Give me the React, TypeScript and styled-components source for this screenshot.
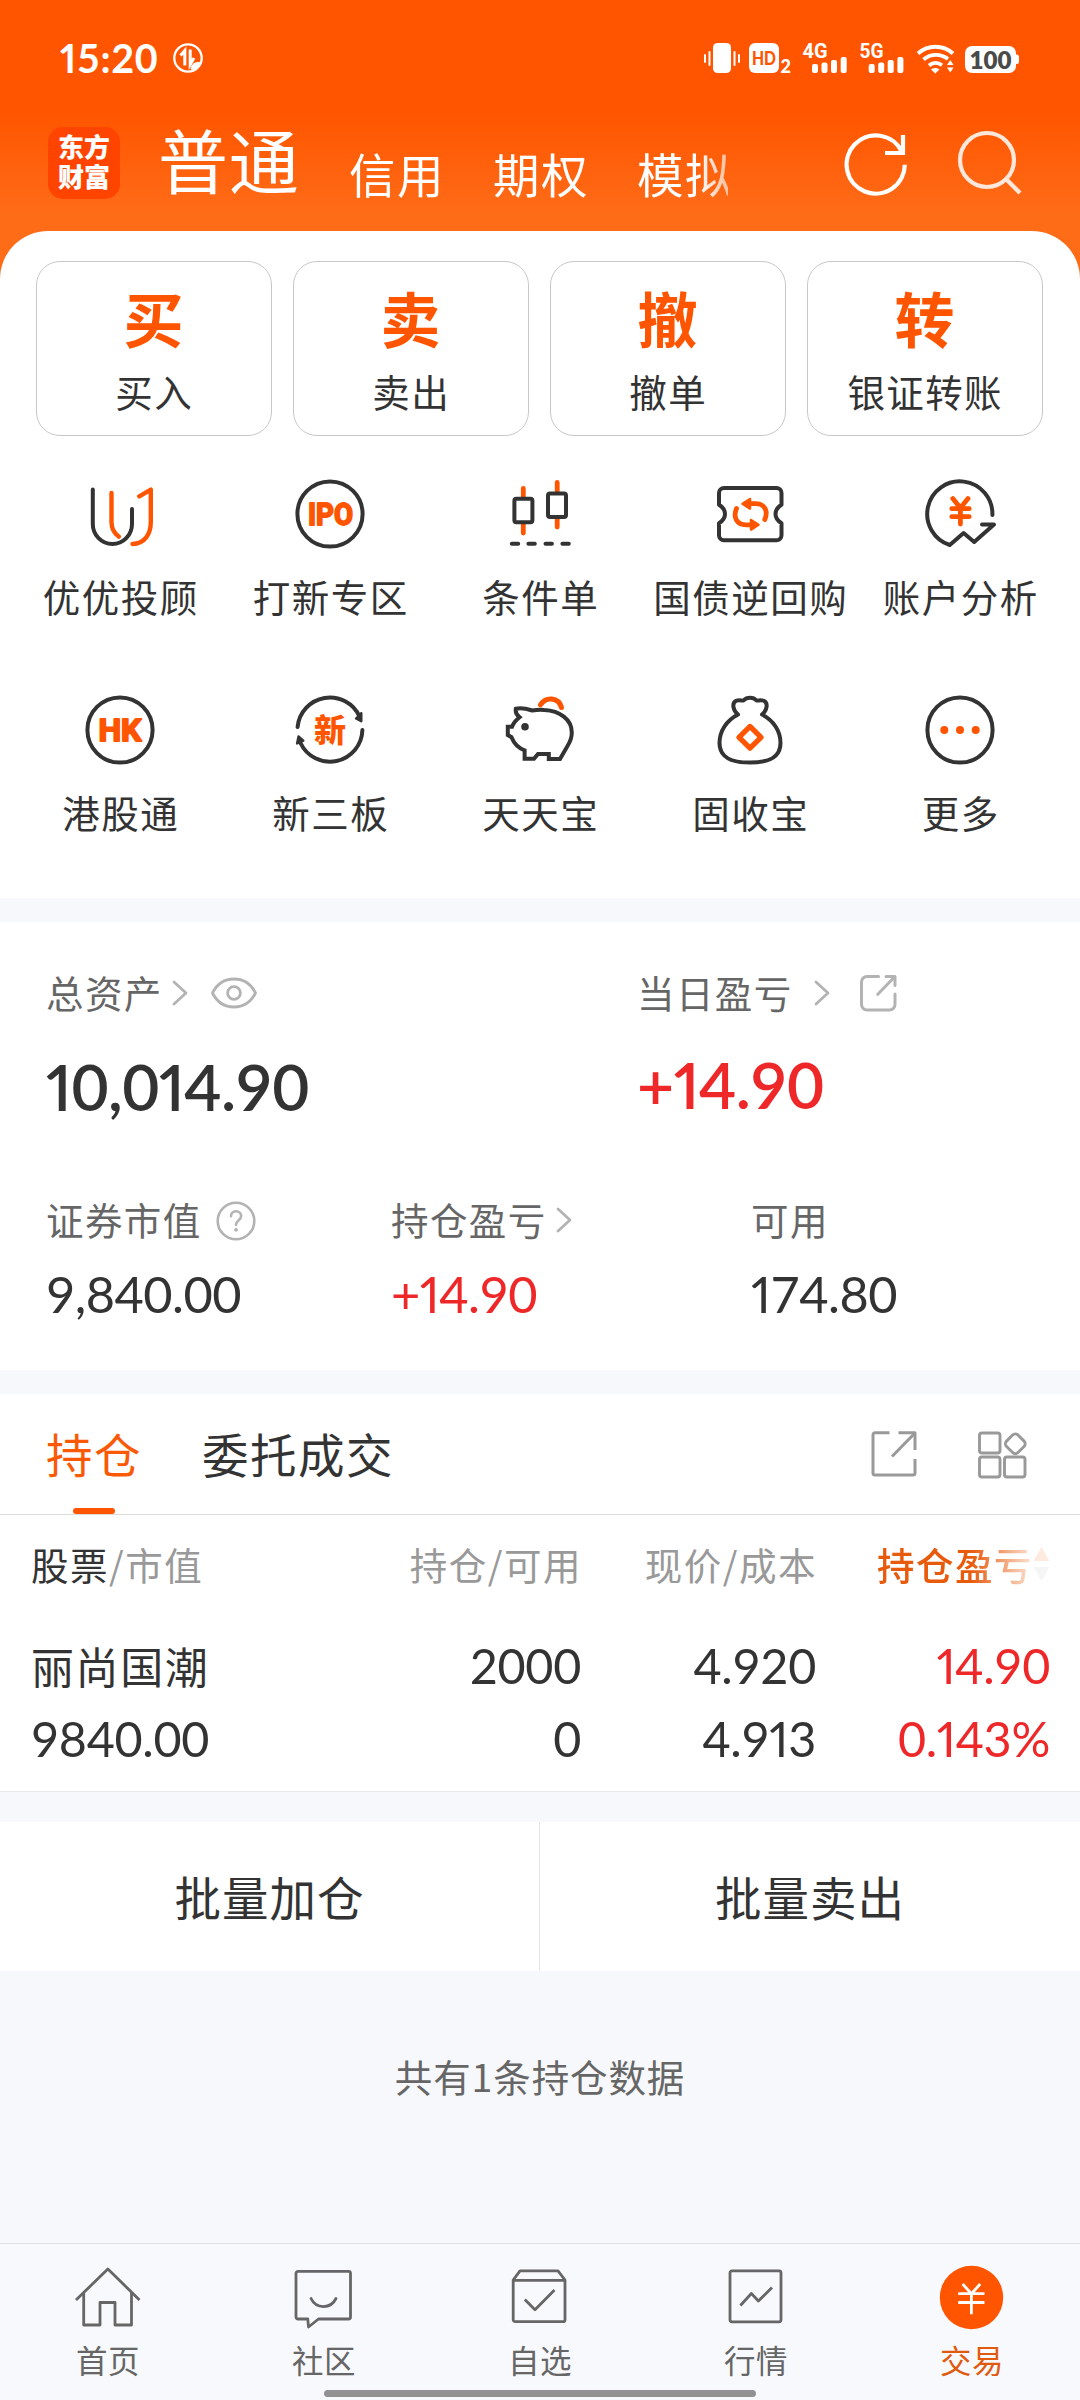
import React from "react";
import styled, { createGlobalStyle } from "styled-components";

const ORANGE = "#ff5500";
const INK = "#333333";
const RED = "#ee2728";

const GlobalStyle = createGlobalStyle`
  * { box-sizing: border-box; }
  html, body { margin: 0; padding: 0; }
  body {
    width: 1080px;
    background: #f7f8fb;
    color: ${INK};
    font-family: "Noto Sans CJK SC", sans-serif;
    font-weight: 400;
    -webkit-font-smoothing: antialiased;
  }
  svg { display: block; flex: none; overflow: visible; }
`;

const Screen = styled.div`
  width: 1080px;
  height: 2400px;
  display: flex;
  flex-direction: column;
  overflow: hidden;
  background: #f7f8fb;
`;

/* ---------- numbers ---------- */

const Digits = styled.span`
  font-variant-numeric: tabular-nums;
`;

const NarrowOne = styled.span`
  font-variant-numeric: proportional-nums;
`;

/* Every figure keeps an even advance except the slim "1". */
const Num = ({ children }: { children: string }) => (
  <Digits>
    {children.split(/(1)/).map((part, i) => (part === "1" ? <NarrowOne key={i}>1</NarrowOne> : part))}
  </Digits>
);

/* ---------- header ---------- */

const Header = styled.header`
  height: 290px;
  flex: none;
  background: linear-gradient(180deg, ${ORANGE} 0, ${ORANGE} 112px, #ff6c18 215px, #ff6c18 100%);
`;

const StatusBar = styled.div`
  height: 115px;
  padding: 0 60px 0 60px;
  display: flex;
  align-items: center;
  color: #fff;
`;

const Clock = styled.div`
  width: 113px;
  font: 700 39.5px/44px Lato, sans-serif;
  letter-spacing: 0.6px;
`;

const StatusIcons = styled.div`
  margin-left: auto;
  display: flex;
  align-items: center;
`;

const NavBar = styled.nav`
  height: 116px;
  padding: 0 57px 0 48px;
  display: flex;
  align-items: flex-start;
  color: #fff;
`;

const Logo = styled.div`
  width: 72px;
  height: 72px;
  margin: 12px 38px 0 0;
  padding-top: 6px;
  border-radius: 15px;
  background: #ff4400;
  text-align: center;
  font-family: "Liberation Sans", "Noto Sans CJK SC", sans-serif;
  font-size: 26px;
  font-weight: 900;
  line-height: 30px;
`;

const NavTabs = styled.div`
  width: 570px;
  height: 100px;
  display: flex;
  white-space: nowrap;
  mask-image: linear-gradient(90deg, #000 540px, transparent 612px);
  mask-size: 612px 100%;
`;

const NavTab = styled.span<{ $active?: boolean }>`
  width: ${(p) => (p.$active ? 191 : 144)}px;
  flex: none;
  font-size: ${(p) => (p.$active ? 70 : 46.5)}px;
  letter-spacing: ${(p) => (p.$active ? 0.8 : 1.4)}px;
  line-height: 60px;
  padding-top: ${(p) => (p.$active ? 14 : 28)}px;
`;

const NavIcons = styled.div`
  margin-left: auto;
  padding-top: 13px;
  display: flex;
  gap: 41px;
`;

/* ---------- trade panel ---------- */

const Sheet = styled.section`
  height: 667px;
  margin-top: -59px;
  padding: 30px 36px 0;
  flex: none;
  border-radius: 48px 48px 0 0;
  background: #fff;
`;

const ActionRow = styled.div`
  display: grid;
  grid-template-columns: repeat(4, 236px);
  column-gap: 21px;
`;

const ActionCard = styled.button`
  height: 175px;
  padding: 0;
  border: 1px solid #c8c8c8;
  border-radius: 24px;
  background: #fff;
  display: flex;
  flex-direction: column;
  align-items: center;
  font-family: inherit;
  color: ${INK};
`;

const ActionGlyph = styled.span`
  margin-top: 19px;
  margin-right: 1px;
  font-size: 60px;
  line-height: 72px;
  font-weight: 700;
  color: ${ORANGE};
`;

const ActionLabel = styled.span`
  margin-top: 12px;
  font-size: 37.5px;
  line-height: 52px;
  letter-spacing: 1.4px;
  margin-right: -0.4px;
`;

const ToolGrid = styled.div`
  margin: 40px -21px 0;
  display: grid;
  grid-template-columns: repeat(5, 210px);
  grid-auto-rows: 216px;
`;

const Tool = styled.div`
  display: flex;
  flex-direction: column;
  align-items: center;
`;

const ToolLabel = styled.span`
  margin-top: 17px;
  font-size: 37.5px;
  line-height: 54px;
  letter-spacing: 1.5px;
  margin-right: -1.5px;
  white-space: nowrap;
`;

const ToolText = styled.text`
  fill: ${ORANGE};
  stroke: ${ORANGE};
  stroke-width: 1.8px;
  stroke-linejoin: round;
  font: 700 30.5px Roboto, sans-serif;
`;

const ToolHan = styled.text`
  fill: ${ORANGE};
  font: 900 32px "Noto Sans CJK SC", sans-serif;
`;

/* ---------- assets ---------- */

const Assets = styled.section`
  height: 448px;
  margin-top: 24px;
  padding: 0 0 0 46px;
  flex: none;
  background: #fff;
`;

const AssetRow = styled.div<{ $height: number; $columns: string }>`
  height: ${(p) => p.$height}px;
  display: grid;
  grid-template-columns: ${(p) => p.$columns};
`;

const AssetLabel = styled.div<{ $top: number }>`
  margin-top: ${(p) => p.$top}px;
  height: 54px;
  display: flex;
  align-items: center;
  font-size: 37.5px;
  line-height: 54px;
  letter-spacing: 1.4px;
  color: #666;

  svg {
    margin-top: 1px;
  }
`;

const Space = styled.i<{ $w: number }>`
  width: ${(p) => p.$w}px;
  flex: none;
`;

const Amount = styled.div<{ $big?: boolean; $up?: boolean; $top: number; $track?: number }>`
  margin-top: ${(p) => p.$top}px;
  font-family: Lato, sans-serif;
  font-size: ${(p) => (p.$big ? 64 : 50.5)}px;
  font-weight: ${(p) => (p.$big ? 600 : 400)};
  line-height: 70px;
  letter-spacing: ${(p) => p.$track ?? -0.5}px;
  color: ${(p) => (p.$up ? RED : INK)};
`;

/* ---------- holdings ---------- */

const Holdings = styled.section`
  height: 398px;
  margin-top: 24px;
  flex: none;
  background: #fff;
  border-bottom: 1px solid #e8e9eb;
`;

const TabBar = styled.div`
  height: 121px;
  padding: 0 53px 0 46px;
  display: flex;
  border-bottom: 1px solid #dcdcdc;
`;

const Tab = styled.div<{ $active?: boolean }>`
  margin-right: 60px;
  display: flex;
  flex-direction: column;
  align-items: center;
  justify-content: space-between;
  padding-top: 27px;
  font-size: 46.5px;
  line-height: 64px;
  letter-spacing: 1.5px;
  color: ${(p) => (p.$active ? "#fa5a08" : INK)};

  &::after {
    content: "";
    width: 42px;
    height: 6px;
    margin-right: 1px;
    border-radius: 3px;
    background: ${(p) => (p.$active ? ORANGE : "transparent")};
  }
`;

const TabTools = styled.div`
  margin-left: auto;
  padding-top: 37px;
  display: flex;
  gap: 61px;
`;

const TableHead = styled.div`
  height: 100px;
  padding: 0 31px 3px 31px;
  display: grid;
  grid-template-columns: 250px 301px 235px 233px;
  align-items: center;
  font-size: 37.5px;
  letter-spacing: 1.5px;
  color: #999;
`;

const HeadCell = styled.div<{ $left?: boolean; $sorted?: boolean }>`
  display: flex;
  justify-content: ${(p) => (p.$left ? "flex-start" : "flex-end")};
  align-items: center;
  line-height: 54px;
  white-space: nowrap;
  color: ${(p) => (p.$sorted ? "#e85a0c" : "inherit")};
  font-weight: ${(p) => (p.$sorted ? 500 : 400)};
  ${(p) => p.$sorted && "mask-image: linear-gradient(90deg, #000 66%, rgba(0,0,0,0.12) 94%);"}
`;

const Dark = styled.span`
  color: ${INK};
`;

const HoldingRow = styled.div`
  padding: 14px 30px 0 31px;
  display: grid;
  grid-template-columns: 250px 300px 235px 234px;
`;

const HoldingCell = styled.div<{ $left?: boolean; $up?: boolean }>`
  display: flex;
  flex-direction: column;
  align-items: ${(p) => (p.$left ? "flex-start" : "flex-end")};
  color: ${(p) => (p.$up ? RED : INK)};
  font-family: Lato, sans-serif;
  font-size: 48.5px;
  letter-spacing: -0.3px;
  line-height: 73px;
`;

const StockName = styled.span`
  font-family: "Noto Sans CJK SC", sans-serif;
  font-size: 43px;
  letter-spacing: 1.6px;
  line-height: 72px;
  margin-bottom: 1px;
`;

const BatchRow = styled.div`
  height: 149px;
  margin-top: 30px;
  flex: none;
  display: grid;
  grid-template-columns: 539px 1fr;
  background: #fff;
`;

const BatchButton = styled.button`
  border: 0;
  padding: 0 0 2px;
  background: none;
  font: 400 46.5px "Noto Sans CJK SC", sans-serif;
  letter-spacing: 1px;
  color: ${INK};

  & + & {
    border-left: 1px solid #e6e7ea;
  }
`;

const Summary = styled.p`
  margin: 0;
  padding-top: 78px;
  text-align: center;
  font-size: 37.5px;
  line-height: 54px;
  letter-spacing: 0.9px;
  color: #666;
  flex: 1;
`;

/* ---------- bottom navigation ---------- */

const BottomNav = styled.nav`
  height: 157px;
  flex: none;
  border-top: 1px solid #e0e1e4;
  background: #f8f9fc;
  display: grid;
  grid-template-columns: repeat(5, 216px);
  position: relative;
`;

const BottomItem = styled.div<{ $active?: boolean }>`
  padding-top: 18px;
  display: flex;
  flex-direction: column;
  align-items: center;
  font-size: 31.5px;
  line-height: 44px;
  letter-spacing: 0.5px;
  color: ${(p) => (p.$active ? "#e05a10" : "#666")};

  span {
    margin-top: 3px;
  }
`;

const HomeIndicator = styled.div`
  position: absolute;
  left: 324px;
  bottom: 3px;
  width: 432px;
  height: 7px;
  border-radius: 4px;
  background: #929292;
`;

/* ---------- icons ---------- */

const ToolSvg = ({ children }: { children: React.ReactNode }) => (
  <svg width="76" height="76" viewBox="0 0 76 76" fill="none" stroke={INK} strokeWidth="4" strokeLinecap="round" strokeLinejoin="round">
    {children}
  </svg>
);

const AdviserIcon = () => (
  <ToolSvg>
    <path d="M10.8 13.5V48a19.6 20 0 0 0 39.2 0V33" />
    <path d="M29.5 17V46c0 6.5 3 11.5 7.2 14.6M57.3 20.3 68.8 13.6V46c0 12-6 21.8-18.3 22" stroke={ORANGE} strokeWidth="4.4" />
  </ToolSvg>
);

const IpoIcon = () => (
  <ToolSvg>
    <circle cx="38" cy="38" r="32.6" />
    <ToolText x="16" y="49" textLength="45" lengthAdjust="spacingAndGlyphs">IPO</ToolText>
  </ToolSvg>
);

const CandleIcon = () => (
  <ToolSvg>
    <path d="M21.3 12.5V21M21.3 48v9M55.2 6.5V16M55.2 43v8" stroke={ORANGE} strokeWidth="4.8" />
    <rect x="12.4" y="22.7" width="18" height="23.6" rx="2" />
    <rect x="46" y="17.5" width="18" height="23.6" rx="2" />
    <path d="M9.8 67.7h6.4M26.4 67.7h6.4M43.5 67.7h6.4M60.4 67.7h6.4" />
  </ToolSvg>
);

const RepoIcon = () => (
  <ToolSvg>
    <path d="M12 12h52.500a5 5 0 0 1 5 5v11.800c-3.600 2.200-6 5.400-6 9.200s2.400 7 6 9.200V59.300a5 5 0 0 1-5 5H12a5 5 0 0 1-5-5V47.200c3.600-2.200 6-5.400 6-9.200s-2.400-7-6-9.200V17a5 5 0 0 1 5-5Z" />
    <g stroke={ORANGE} strokeWidth="4.8">
      <path d="M24.500 32.500c-3.600 8.500 0 16.300 9.500 16.300h6M52.800 43.500c3.600-8.500 0-15.800-9.300-15.800H36" />
      <path d="M38 23v9.600l-7.500-4.800ZM39 44v9.600l7.500-4.800Z" fill={ORANGE} strokeWidth="2.5" />
    </g>
  </ToolSvg>
);

const AnalysisIcon = () => (
  <ToolSvg>
    <path d="M70.400 39A32.600 32.600 0 1 0 27.800 69L41.600 57l10.600 9L72 48.500H60" />
    <path d="M30.800 22.500l7.600 9.500 7.600-9.500M38.400 32.500V48M29.800 32.700h17.400M29.800 40.700h17.400" stroke={ORANGE} strokeWidth="4.8" />
  </ToolSvg>
);

const HkIcon = () => (
  <ToolSvg>
    <circle cx="38" cy="38" r="32.6" />
    <ToolText x="16.5" y="49" textLength="43" lengthAdjust="spacingAndGlyphs">HK</ToolText>
  </ToolSvg>
);

const NewBoardIcon = () => (
  <ToolSvg>
    <path d="M5.600 35A32.500 32.500 0 0 1 67.500 24.500M70.400 38A32.500 32.500 0 0 1 8.500 51" />
    <path d="M69.300 21.200 64 26.500l5.300 2.800ZM6.500 44.500l4.800 4.200-6.200 2.700Z" fill={INK} strokeWidth="2.4" />
    <ToolHan x="22" y="49.6" stroke="none">新</ToolHan>
  </ToolSvg>
);

const PigIcon = () => (
  <ToolSvg>
    <path d="M13.800 16.800c5-1.300 10-.3 16.500 1.700 4-.6 8-.8 12-.5 15.500.8 27.500 9.500 27.500 22.500 0 5-1.600 9.200-4.300 13.500L58 67H46.800v-5H36l-4 4.800H22.600V58.300C16.500 56 12 51.500 9.500 45.200L5.800 43V34.800H10c1.300-3.600 3.800-6.600 7.500-9.600-3-2.300-4.200-5-3.700-8.400Z" strokeLinejoin="miter" />
    <circle cx="23" cy="34.7" r="3.8" fill={INK} stroke="none" />
    <path d="M38.500 12.800c5.200-8.500 18-8 21 2.700" stroke={ORANGE} strokeWidth="5" />
  </ToolSvg>
);

const BagIcon = () => (
  <ToolSvg>
    <path d="M26 22.500c-5-4-6.500-11.500-1.800-13.700 2-.9 4.800-.3 7.300-.3 3.300-3.700 9.700-3.700 13 0 2.500 0 5.300-.6 7.300.3 4.700 2.200 3.200 9.700-1.800 13.700C61.500 28.500 68.500 39 68.500 51c0 15-12 19.500-30.500 19.500S7.500 66 7.500 51C7.500 39 14.500 28.500 26 22.500Z" />
    <path d="M38 34.400 49 45.300 38 56.200 27 45.300Z" stroke={ORANGE} strokeWidth="5.2" />
  </ToolSvg>
);

const MoreIcon = () => (
  <ToolSvg>
    <circle cx="38" cy="38" r="32.6" />
    <g fill={ORANGE} stroke="none">
      <circle cx="22.3" cy="38" r="4" />
      <circle cx="38" cy="38" r="4" />
      <circle cx="53.7" cy="38" r="4" />
    </g>
  </ToolSvg>
);

const Chevron = () => (
  <svg width="16" height="26" viewBox="0 0 16 26" fill="none" stroke="#b3b3b3" strokeWidth="2.8" strokeLinecap="round" strokeLinejoin="round">
    <path d="M2 2l12 11L2 24" />
  </svg>
);

const EyeIcon = () => (
  <svg width="46" height="32" viewBox="0 0 46 32" fill="none" stroke="#b3b3b3" strokeWidth="2.8">
    <path d="M1.500 16C6 7 14 2 23 2s17 5 21.500 14C40 25 32 30 23 30S6 25 1.500 16Z" strokeLinejoin="round" />
    <circle cx="23" cy="16" r="6.4" />
  </svg>
);

const HelpIcon = () => (
  <svg width="40" height="40" viewBox="0 -1 40 40" fill="none" stroke="#b3b3b3" strokeWidth="2.6" strokeLinecap="round">
    <circle cx="20" cy="20" r="18.3" />
    <path d="M15 15.300c0-3 2.200-5 5-5s5.200 2 5.200 4.800c0 4-5.200 4.200-5.200 8.600" />
    <circle cx="20" cy="28.8" r="1.4" fill="#b3b3b3" strokeWidth="1" />
  </svg>
);

const SmallShareIcon = () => (
  <svg width="38" height="38" viewBox="0 0 38 38" fill="none" stroke="#b3b3b3" strokeWidth="3" strokeLinecap="round" strokeLinejoin="round">
    <path d="M19.500 2.500H8a5.500 5.500 0 0 0-5.500 5.500v22.500A5.500 5.500 0 0 0 8 36h22.500a5.500 5.500 0 0 0 5.500-5.500V20M27 2.500h9V11.500M35.500 3 18.800 20.300" />
  </svg>
);

const ShareIcon = () => (
  <svg width="46" height="46" viewBox="0 0 46 46" fill="none" stroke="#999" strokeWidth="3" strokeLinejoin="round">
    <path d="M18.500 1.700H4a2 2 0 0 0-2 2V42a2 2 0 0 0 2 2h38a2 2 0 0 0 2-2V28M27.500 1.700H44V19" />
    <path d="M43.500 2.500 21 25.500" />
  </svg>
);

const GridIcon = () => (
  <svg width="49" height="47" viewBox="0 0 49 47" fill="none" stroke="#999" strokeWidth="2.9" strokeLinejoin="round">
    <rect x="1.5" y="2" width="20.5" height="20" rx="2.5" />
    <rect x="1.5" y="26" width="20.5" height="20" rx="2.5" />
    <rect x="26.5" y="26" width="20.5" height="20" rx="2.5" />
    <rect x="29.2" y="4.7" width="16.2" height="16.2" rx="3.8" transform="rotate(45 37.3 12.8)" />
  </svg>
);

const SortIcon = () => (
  <svg width="17" height="36" viewBox="0 0 17 36">
    <path d="M8.500 1 16.500 15H.5Z" fill="#ff5500" />
    <path d="M8.500 35 16.500 21H.5Z" fill="#aaaaaa" />
  </svg>
);

const RefreshIcon = () => (
  <svg width="72" height="72" viewBox="0 0 72 72" fill="none" stroke="#fff" strokeWidth="4.2">
    <path d="M64.800 36.800A29.100 29.100 0 1 1 62 24" />
    <path d="M63 7v18H45" />
  </svg>
);

const SearchIcon = () => (
  <svg width="70" height="72" viewBox="0 0 70 72" fill="none" stroke="#ffe8db" strokeWidth="4.2">
    <circle cx="34" cy="32" r="27" />
    <path d="M53.500 51.500 67 65" />
  </svg>
);

const DataSaverIcon = () => (
  <svg width="30" height="30" viewBox="0 0 30 30" fill="none" stroke="#fff" strokeWidth="2.3">
    <circle cx="15" cy="15" r="13.7" />
    <path d="M11.800 22.500V7.500L7.500 12.500M17.200 6.500v15l3.800-6.500" strokeWidth="3" />
    <path d="M18 26c.5-5 4-7 9.500-6.500-1.500 4-5 7.500-9.500 6.500Z" fill="#fff" strokeWidth="1" />
  </svg>
);

const StatusCluster = () => (
  <svg width="317" height="32" viewBox="704 41 317 32" fill="#fff">
    <rect x="714" y="42" width="18" height="30" rx="4.5" />
    <path d="M706 54v7M710.500 51v13M735.500 51v13M740 54v7" stroke="#fff" strokeWidth="2" strokeLinecap="round" />
    <rect x="750" y="42" width="30" height="30" rx="6" />
    <text x="753" y="64" fill={ORANGE} fontFamily="Lato, sans-serif" fontWeight="900" fontSize="19" textLength="24" lengthAdjust="spacingAndGlyphs">HD</text>
    <text x="781.5" y="71.5" fontFamily="Lato, sans-serif" fontWeight="900" fontSize="18">2</text>
    <text x="803.5" y="56.5" fontFamily="Roboto, sans-serif" fontWeight="700" fontSize="20.5" textLength="25" lengthAdjust="spacingAndGlyphs">4G</text>
    <text x="860.5" y="56.5" fontFamily="Roboto, sans-serif" fontWeight="700" fontSize="20.5" textLength="24" lengthAdjust="spacingAndGlyphs">5G</text>
    {[813, 869.7].map((x) => (
      <g key={x}>
        <rect x={x} y="63" width="6" height="9" rx="2" />
        <rect x={x + 9.5} y="61.5" width="6" height="10.5" rx="2" />
        <rect x={x + 19} y="59" width="6" height="13" rx="2" />
        <rect x={x + 28.7} y="56" width="6" height="16" rx="2" />
      </g>
    ))}
    <g fill="none" stroke="#fff" strokeWidth="3.8">
      <path d="M919 52.500c10-9 25-9 35 0M924.500 58.500c7.200-6.200 17.300-6.200 24.500-.5M930 64.500c4-3.300 9-3.300 13-.3" />
    </g>
    <path d="M932 68.500c2.500-2 6-2 8.500 0l-4.200 4ZM948 64l3.300-5 3.300 5ZM948 66.500l3.300 5 3.300-5Z" />
    <rect x="966" y="45" width="51" height="27" rx="7" />
    <rect x="1014" y="53.5" width="6" height="9.5" rx="2.5" />
    <text x="970.5" y="67.5" fill="#4a4a4a" fontFamily="Lato, sans-serif" fontWeight="800" fontSize="24.5" textLength="42" lengthAdjust="spacingAndGlyphs">100</text>
  </svg>
);

const NavSvg = ({ children }: { children: React.ReactNode }) => (
  <svg width="72" height="72" viewBox="0 0 72 72" fill="none" stroke="#666" strokeWidth="2.8" strokeLinejoin="round">
    {children}
  </svg>
);

const HomeIcon = () => (
  <NavSvg>
    <path d="M4 38 35.900 7 67.500 38" />
    <path d="M11.700 31v32H28V40.500h15V63h16.500V31" />
  </NavSvg>
);

const CommunityIcon = () => (
  <NavSvg>
    <path d="M10 9.300h50.500a2 2 0 0 1 2 2V55a2 2 0 0 1-2 2H30.500L20.500 65l-.7-8H10a2 2 0 0 1-2-2V11.300a2 2 0 0 1 2-2Z" />
    <path d="M23 36.500c5 10.500 19.500 11 25 0" strokeLinecap="round" />
  </NavSvg>
);

const WatchIcon = () => (
  <NavSvg>
    <path d="M9.200 18 16 8.800h38L61 18v39.700a2 2 0 0 1-2 2H11.200a2 2 0 0 1-2-2ZM9.200 18.300H61" />
    <path d="M20.800 37.500 31 47.700 50.500 28" />
  </NavSvg>
);

const MarketIcon = () => (
  <NavSvg>
    <rect x="10" y="8.8" width="51" height="51" rx="2" />
    <path d="M20.400 43.500 31.400 31.500l7 7.500L52 25.500" />
  </NavSvg>
);

const TradeIcon = () => (
  <NavSvg>
    <circle cx="35.5" cy="35.5" r="31.7" fill={ORANGE} stroke="none" />
    <path d="M26.600 22l8.800 9.700L44.200 22M22.200 31.700h26.300M22.200 40.500h26.300M35.400 31.700v20.600" stroke="#fff" />
  </NavSvg>
);

/* ---------- data ---------- */

const actions = [
  ["买", "买入"],
  ["卖", "卖出"],
  ["撤", "撤单"],
  ["转", "银证转账"],
];

const tools: [string, React.FC][] = [
  ["优优投顾", AdviserIcon],
  ["打新专区", IpoIcon],
  ["条件单", CandleIcon],
  ["国债逆回购", RepoIcon],
  ["账户分析", AnalysisIcon],
  ["港股通", HkIcon],
  ["新三板", NewBoardIcon],
  ["天天宝", PigIcon],
  ["固收宝", BagIcon],
  ["更多", MoreIcon],
];

const bottomItems: [string, React.FC][] = [
  ["首页", HomeIcon],
  ["社区", CommunityIcon],
  ["自选", WatchIcon],
  ["行情", MarketIcon],
  ["交易", TradeIcon],
];

export default function App() {
  return (
    <Screen>
      <GlobalStyle />
      <Header>
        <StatusBar>
          <Clock>
            <Num>15:20</Num>
          </Clock>
          <DataSaverIcon />
          <StatusIcons>
            <StatusCluster />
          </StatusIcons>
        </StatusBar>
        <NavBar>
          <Logo>
            东方
            <br />
            财富
          </Logo>
          <NavTabs>
            <NavTab $active>普通</NavTab>
            <NavTab>信用</NavTab>
            <NavTab>期权</NavTab>
            <NavTab>模拟</NavTab>
          </NavTabs>
          <NavIcons>
            <RefreshIcon />
            <SearchIcon />
          </NavIcons>
        </NavBar>
      </Header>

      <Sheet>
        <ActionRow>
          {actions.map(([glyph, label]) => (
            <ActionCard key={label}>
              <ActionGlyph>{glyph}</ActionGlyph>
              <ActionLabel>{label}</ActionLabel>
            </ActionCard>
          ))}
        </ActionRow>
        <ToolGrid>
          {tools.map(([label, Icon]) => (
            <Tool key={label}>
              <Icon />
              <ToolLabel>{label}</ToolLabel>
            </Tool>
          ))}
        </ToolGrid>
      </Sheet>

      <Assets>
        <AssetRow $height={227} $columns="591px 1fr">
          <div>
            <AssetLabel $top={43}>
              总资产
              <Space $w={9} />
              <Chevron />
              <Space $w={23} />
              <EyeIcon />
            </AssetLabel>
            <Amount $big $top={33}>
              <Num>10,014.90</Num>
            </Amount>
          </div>
          <div>
            <AssetLabel $top={43}>
              当日盈亏
              <Space $w={21} />
              <Chevron />
              <Space $w={29} />
              <SmallShareIcon />
            </AssetLabel>
            <Amount $big $up $top={31}>
              <Num>+14.90</Num>
            </Amount>
          </div>
        </AssetRow>
        <AssetRow $height={200} $columns="345px 360px 1fr">
          <div>
            <AssetLabel $top={43}>
              证券市值
              <Space $w={14} />
              <HelpIcon />
            </AssetLabel>
            <Amount $top={13}>
              <Num>9,840.00</Num>
            </Amount>
          </div>
          <div>
            <AssetLabel $top={43}>
              持仓盈亏
              <Space $w={9} />
              <Chevron />
            </AssetLabel>
            <Amount $up $top={13}>
              <Num>+14.90</Num>
            </Amount>
          </div>
          <div>
            <AssetLabel $top={43}>可用</AssetLabel>
            <Amount $top={13}>
              <Num>174.80</Num>
            </Amount>
          </div>
        </AssetRow>
      </Assets>

      <Holdings>
        <TabBar>
          <Tab $active>持仓</Tab>
          <Tab>委托成交</Tab>
          <TabTools>
            <ShareIcon />
            <GridIcon />
          </TabTools>
        </TabBar>
        <TableHead>
          <HeadCell $left>
            <Dark>股票</Dark>/市值
          </HeadCell>
          <HeadCell>持仓/可用</HeadCell>
          <HeadCell>现价/成本</HeadCell>
          <HeadCell $sorted>
            持仓盈亏
            <SortIcon />
          </HeadCell>
        </TableHead>
        <HoldingRow>
          <HoldingCell $left>
            <StockName>丽尚国潮</StockName>
            <Num>9840.00</Num>
          </HoldingCell>
          <HoldingCell>
            <Num>2000</Num>
            <Num>0</Num>
          </HoldingCell>
          <HoldingCell>
            <Num>4.920</Num>
            <Num>4.913</Num>
          </HoldingCell>
          <HoldingCell $up>
            <Num>14.90</Num>
            <Num>0.143%</Num>
          </HoldingCell>
        </HoldingRow>
      </Holdings>

      <BatchRow>
        <BatchButton>批量加仓</BatchButton>
        <BatchButton>批量卖出</BatchButton>
      </BatchRow>
      <Summary>共有1条持仓数据</Summary>

      <BottomNav>
        {bottomItems.map(([label, Icon]) => (
          <BottomItem key={label} $active={label === "交易"}>
            <Icon />
            <span>{label}</span>
          </BottomItem>
        ))}
        <HomeIndicator />
      </BottomNav>
    </Screen>
  );
}
